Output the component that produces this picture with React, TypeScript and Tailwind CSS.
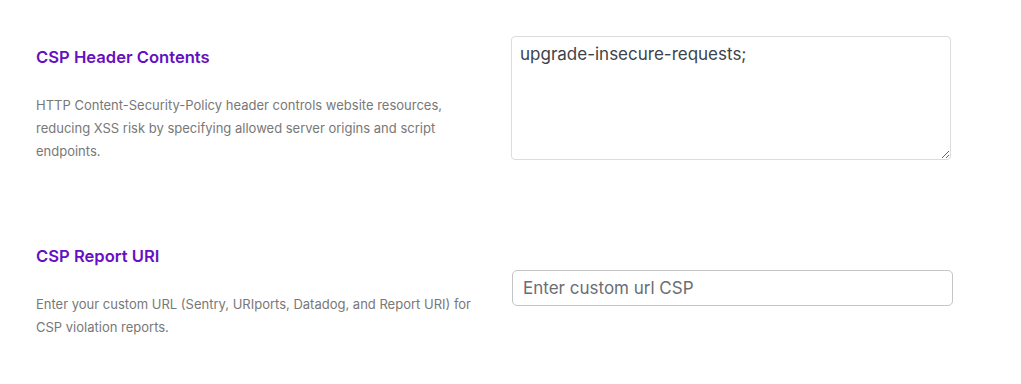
import React from "react";

const font = { fontFamily: "Inter, 'Noto Sans', sans-serif" };

type RowProps = {
  title: string;
  description: string;
  children: React.ReactNode;
  className?: string;
};

const SettingRow: React.FC<RowProps> = ({ title, description, children, className }) => {
  return (
    <div className={`flex ${className ?? ""}`}>
      <div className="w-[475px] shrink-0 pr-[30px]">
        <h3 className="text-[16.6px] leading-[24px] font-semibold text-[#6610c0]">{title}</h3>
        <p className="mt-[25px] text-[13px] leading-[23px] text-[#787878]">{description}</p>
      </div>
      <div className="w-[441px]">{children}</div>
    </div>
  );
};

export default function App() {
  return (
    <div className="min-h-[384px] w-[1021px] bg-white pl-[36px]" style={font}>
      <SettingRow
        className="pt-[45px]"
        title="CSP Header Contents"
        description="HTTP Content-Security-Policy header controls website resources, reducing XSS risk by specifying allowed server origins and script endpoints."
      >
        <textarea
          defaultValue="upgrade-insecure-requests;"
          className="-mt-[9px] block h-[124px] w-[440px] rounded-[4px] border border-[#dcdcde] px-[8px] py-[6px] text-[17px] leading-[22px] text-[#3c434a] outline-none"
        />
      </SettingRow>

      <SettingRow
        className="mt-[81px]"
        title="CSP Report URI"
        description="Enter your custom URL (Sentry, URIports, Datadog, and Report URI) for CSP violation reports."
      >
        <input
          type="text"
          placeholder="Enter custom url CSP"
          className="ml-px mt-[26px] block h-[36px] w-[441px] rounded-[5px] border border-[#c3c4c7] px-[10px] text-[17px] text-[#3c434a] outline-none placeholder:text-[#6b6e73]"
        />
      </SettingRow>
    </div>
  );
}
